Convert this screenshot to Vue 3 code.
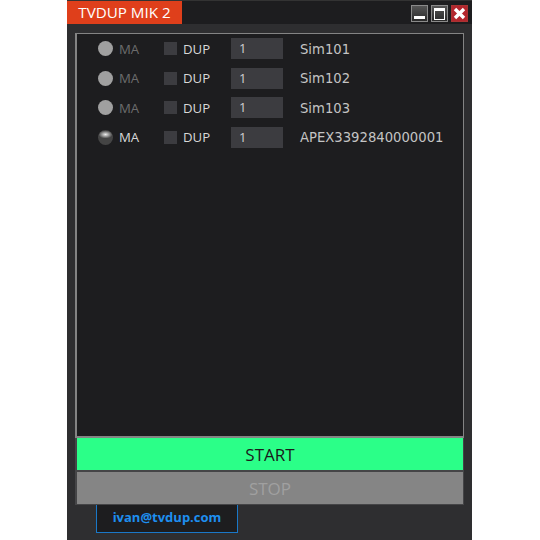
<script setup>
const rows = [
  { id: 'Sim101', online: false },
  { id: 'Sim102', online: false },
  { id: 'Sim103', online: false },
  { id: 'APEX3392840000001', online: true },
]
</script>

<template>
  <div class="window">
    <header class="titlebar">
      <div class="title">TVDUP MIK 2</div>
      <div class="controls">
        <span class="ctl"><i class="min-bar"></i></span>
        <span class="ctl"><i class="max-box"></i></span>
        <span class="ctl close">
          <svg width="15" height="15" viewBox="0 0 15 15">
            <path d="M3 3 L12 12 M12 3 L3 12" stroke="#fff" stroke-width="3.4" />
          </svg>
        </span>
      </div>
    </header>

    <main class="body">
      <section class="panel">
        <div v-for="row in rows" :key="row.id" class="row">
          <span class="radio" :class="{ on: row.online }"></span>
          <span class="ma" :class="{ on: row.online }">MA</span>
          <span class="check"></span>
          <span class="dup">DUP</span>
          <span class="num">1</span>
          <span class="sim">{{ row.id }}</span>
        </div>
      </section>
      <div class="actions">
        <button class="btn start">START</button>
        <button class="btn stop">STOP</button>
      </div>
      <div class="email">ivan@tvdup.com</div>
    </main>
  </div>
</template>

<style>
html,
body {
  margin: 0;
  background: #fff;
}
</style>

<style scoped>
.window {
  width: 405px;
  height: 540px;
  margin-left: 67px;
  background: #2e2e30;
  overflow: hidden;
  font-family: 'Open Sans', 'Liberation Sans', sans-serif;
  display: flex;
  flex-direction: column;
}

.titlebar {
  height: 24px;
  flex: none;
  background: #1d1d1f;
  display: flex;
  justify-content: space-between;
  border-top: 1px solid #333;
  box-sizing: border-box;
}

.title {
  width: 115px;
  background: #df3f1b;
  color: #fff;
  font-size: 15.2px;
  line-height: 23px;
  text-align: center;
}

.controls {
  display: flex;
  gap: 3px;
  padding: 4px 4px 0 0;
}

.ctl {
  width: 17px;
  height: 17px;
  box-sizing: border-box;
  border: 1px solid #8a8a8a;
  background: linear-gradient(#555, #2a2a2a);
  display: flex;
  align-items: center;
  justify-content: center;
  position: relative;
}

.min-bar {
  position: absolute;
  left: 2px;
  right: 2px;
  bottom: 2px;
  height: 3px;
  background: #fff;
}

.max-box {
  width: 9px;
  height: 8px;
  border: 1px solid #fff;
  border-top-width: 3px;
}

.close {
  background: #b3262d;
  border-color: #a33;
}

.body {
  flex: 1;
  padding: 9px 8px 0;
  display: flex;
  flex-direction: column;
  min-height: 0;
}

.panel {
  height: 405px;
  flex: none;
  box-sizing: border-box;
  border: 2px solid #848484;
  border-top-width: 1px;
  border-right-width: 1px;
  background: #1d1d1f;
  padding-left: 20px;
}

.row {
  height: 29.5px;
  display: flex;
  align-items: center;
  font-size: 13.2px;
}

.radio {
  width: 15px;
  height: 15px;
  margin-left: 1px;
  border-radius: 50%;
  background: #a0a0a0;
  flex: none;
}

.radio.on {
  background: radial-gradient(ellipse 7px 4px at 50% 30%, #eee, #666 80%, #444);
}

.ma {
  width: 45px;
  margin-left: 6px;
  color: #6c6c6c;
  flex: none;
}

.ma.on {
  color: #d8d8d8;
}

.check {
  width: 13px;
  height: 13px;
  background: #3c3c40;
  flex: none;
}

.dup {
  width: 48px;
  margin-left: 6px;
  color: #d8d8d8;
  flex: none;
}

.num {
  width: 52px;
  height: 21px;
  box-sizing: border-box;
  padding-left: 8px;
  background: #3c3c40;
  color: #d0d0d0;
  font-size: 13px;
  line-height: 21px;
  flex: none;
}

.sim {
  margin: 1px 0 0 17px;
  color: #c4c4c4;
  font-family: 'DejaVu Sans', sans-serif;
  font-size: 13.2px;
}

.actions {
  flex: none;
  display: flex;
  flex-direction: column;
  gap: 2px;
  padding: 0 1px 1px 2px;
  background: #454547;
}

.btn {
  display: block;
  width: 100%;
  height: 32px;
  margin: 0;
  box-sizing: border-box;
  border: 0;
  font-family: inherit;
  font-size: 17px;
}

.start {
  background: #2bff88;
  color: #1a1a1a;
}

.stop {
  background: #858585;
  color: #a0a0a0;
}

.email {
  width: 142px;
  height: 28px;
  margin-left: 21px;
  box-sizing: border-box;
  background: #1d1d1f;
  border: 1px solid #1a78c8;
  border-top: 0;
  color: #1e8ff0;
  font-size: 13px;
  font-weight: 700;
  line-height: 24px;
  text-align: center;
  flex: none;
}
</style>
